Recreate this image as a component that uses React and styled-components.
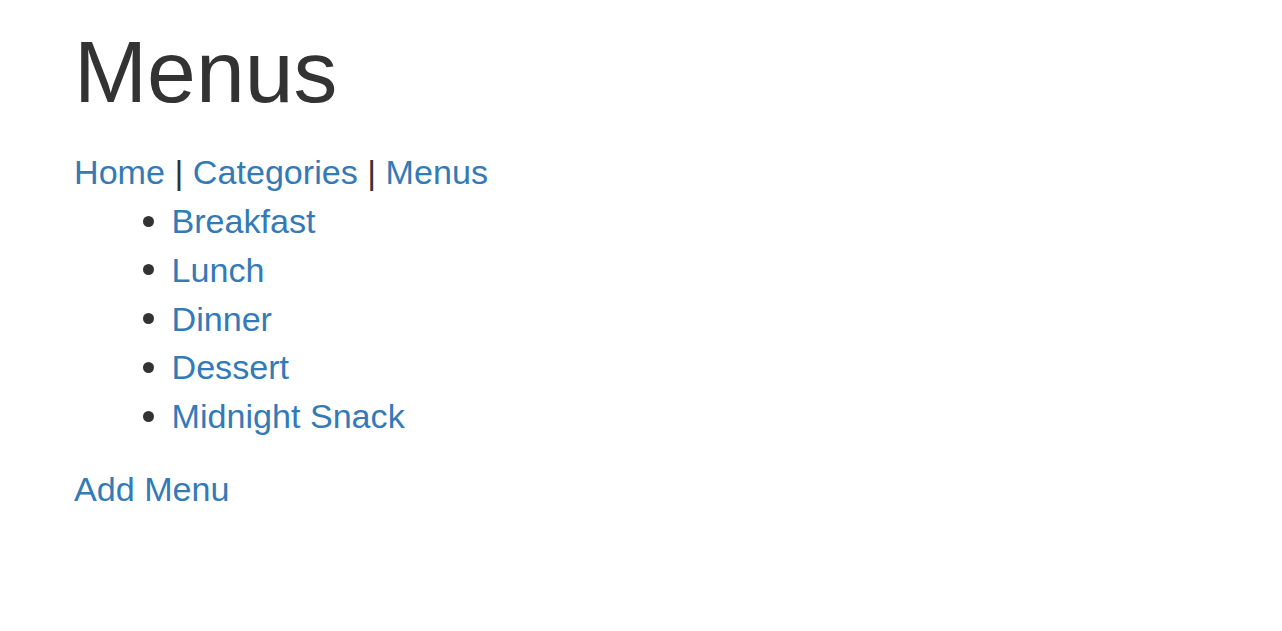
import styled, { createGlobalStyle } from "styled-components";

const GlobalStyle = createGlobalStyle`
	body {
		margin: 0;
		background: #fff;
		font-family: "Liberation Sans", Arial, Helvetica, sans-serif;
		font-size: 34.125px;
		line-height: 48.75px;
		color: #333;
	}
`;

const Page = styled.div`
	padding: 24.4px 74px 0;
`;

const Title = styled.h1`
	margin: 0 0 27.4px;
	font-size: 87.75px;
	font-weight: 500;
	line-height: 1.1;
	color: #333;
`;

const Link = styled.a`
	color: #337ab7;
	text-decoration: none;
`;

const Nav = styled.div`
	white-space: nowrap;
`;

const MenuList = styled.ul`
	margin: 0 0 24.4px;
	padding-left: 97.5px;
	list-style: none;
`;

const MenuItem = styled.li`
	position: relative;

	&::before {
		content: "";
		position: absolute;
		left: -29px;
		top: 18.5px;
		width: 11px;
		height: 11px;
		border-radius: 50%;
		background: #333;
	}
`;

const Footer = styled.div``;

const menus = ["Breakfast", "Lunch", "Dinner", "Dessert", "Midnight Snack"];

export default function App() {
	return (
		<Page>
			<GlobalStyle />
			<Title>Menus</Title>
			<Nav>
				<Link href="#">Home</Link> | <Link href="#">Categories</Link> | <Link href="#">Menus</Link>
			</Nav>
			<MenuList>
				{menus.map((m) => (
					<MenuItem key={m}>
						<Link href="#">{m}</Link>
					</MenuItem>
				))}
			</MenuList>
			<Footer>
				<Link href="#">Add Menu</Link>
			</Footer>
		</Page>
	);
}
